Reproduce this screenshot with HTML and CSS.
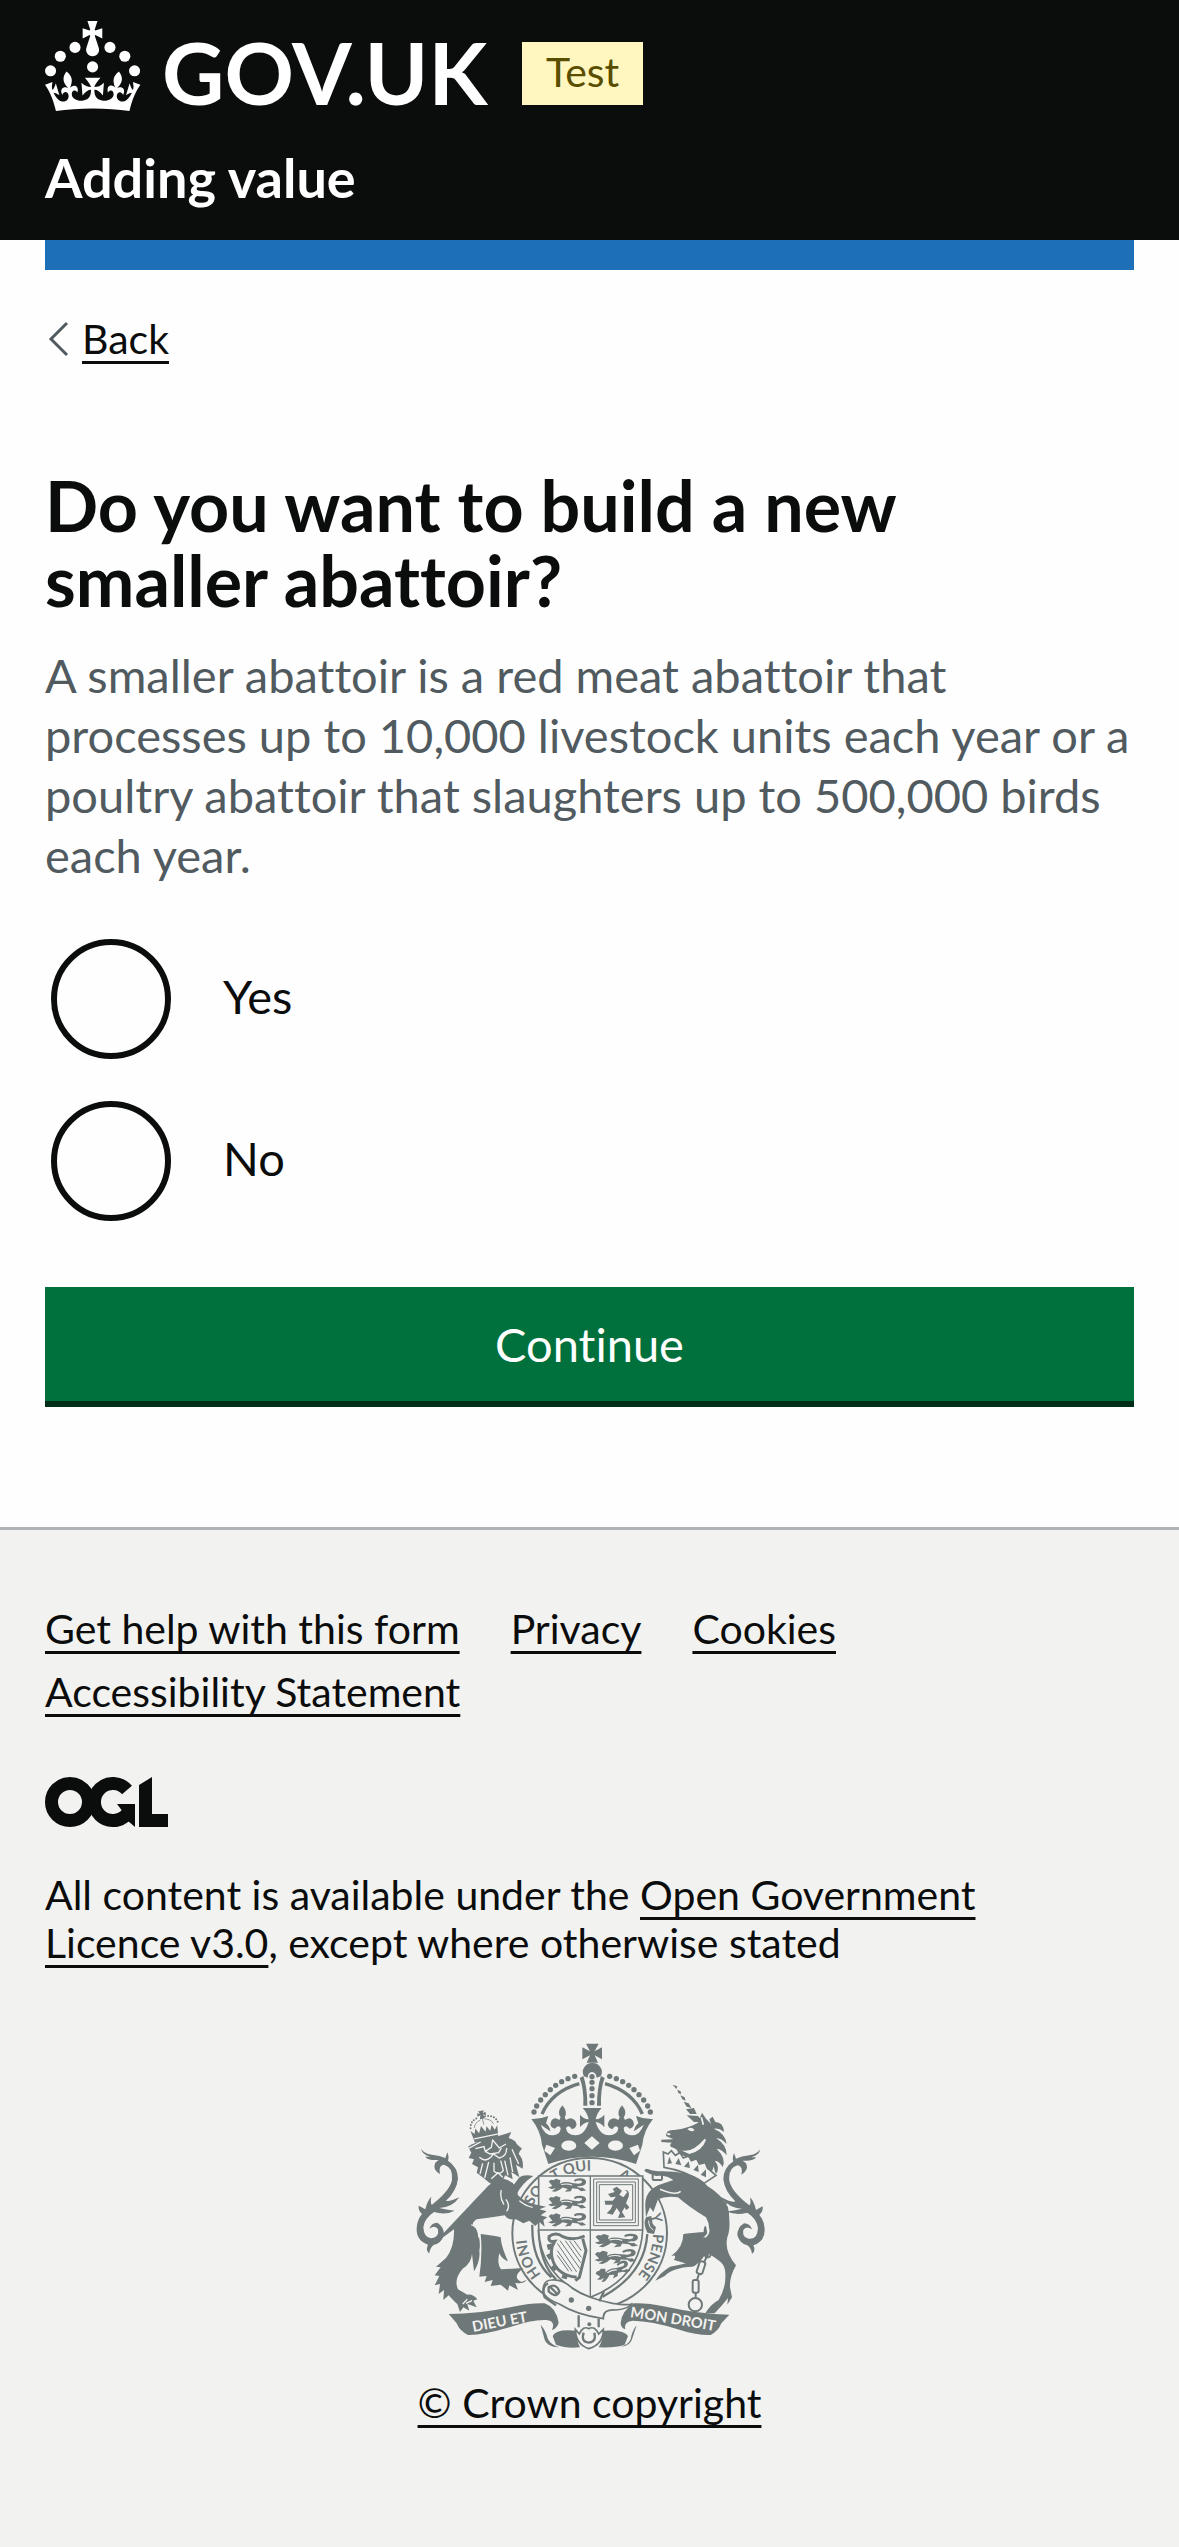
FILE: index.html
```html
<!DOCTYPE html>
<html lang="en">
<head>
<meta charset="utf-8">
<meta name="viewport" content="width=device-width, initial-scale=1">
<title>Do you want to build a new smaller abattoir? - Adding value - GOV.UK</title>
<link rel="stylesheet" href="styles.css">
</head>
<body>
<header class="header">
  <div class="header-inner">
    <div class="header-logo">
      <a class="logo-link" href="#" aria-label="GOV.UK">
        <svg class="logo" viewBox="0 0 450 90" fill="currentColor" aria-hidden="true">
          <g transform="scale(1.5)">
            <circle cx="20" cy="17.6" r="3.7"/><circle cx="10.2" cy="23.5" r="3.7"/><circle cx="3.7" cy="33.2" r="3.7"/><circle cx="31.7" cy="30.6" r="3.7"/><circle cx="43.3" cy="17.6" r="3.7"/><circle cx="53.2" cy="23.5" r="3.7"/><circle cx="59.7" cy="33.2" r="3.7"/>
            <path d="M33.1,9.8c.2-.1.3-.3.5-.5l4.6,2.4v-6.8l-4.6,1.5c-.1-.2-.3-.3-.5-.5l1.9-5.9h-6.7l1.9,5.9c-.2.1-.3.3-.5.5l-4.6-1.5v6.8l4.6-2.4c.1.2.3.3.5.5l-2.6,8c-.9,2.8,1.2,5.7,4.1,5.7h0c3,0,5.1-2.9,4.1-5.7l-2.6-8ZM37,37.9s-3.4,3.8-4.1,6.1c2.2,0,4.2-.5,6.4-2.8l-.7,8.5c-2-2.8-4.4-4.1-5.7-3.8.1,3.1.5,6.7,5.8,7.2,3.7.3,6.7-1.5,7-3.8.4-2.6-2-4.3-3.7-1.6-1.4-4.5,2.4-6.1,4.9-3.2-1.9-4.5-1.8-7.7,2.4-10.9,3,4,2.6,7.3-1.2,11.1,2.4-1.3,6.2,0,4,4.6-1.2-2.8-3.7-2.2-4.2.2-.3,1.7.7,3.7,3,4.2,1.9.3,4.7-.9,7-5.9-1.3,0-2.4.7-3.9,1.7l2.4-8c.6,2.3,1.4,3.7,2.2,4.5.6-1.6.5-2.8,0-5.3l5,1.8c-2.6,3.6-5.2,8.7-7.3,17.5-7.4-1.1-15.7-1.7-24.5-1.7h0c-8.8,0-17.1.6-24.5,1.7-2.1-8.9-4.7-13.9-7.3-17.5l5-1.8c-.5,2.5-.6,3.7,0,5.3.8-.8,1.6-2.3,2.2-4.5l2.4,8c-1.5-1-2.6-1.7-3.9-1.7,2.3,5,5.2,6.2,7,5.9,2.3-.4,3.3-2.4,3-4.2-.5-2.4-3-3.1-4.2-.2-2.2-4.6,1.6-6,4-4.6-3.7-3.7-4.2-7.1-1.2-11.1,4.2,3.2,4.3,6.4,2.4,10.9,2.5-2.8,6.3-1.3,4.9,3.2-1.8-2.7-4.1-1-3.7,1.6.3,2.3,3.3,4.1,7,3.8,5.4-.5,5.7-4.2,5.8-7.2-1.3-.2-3.7,1-5.7,3.8l-.7-8.5c2.2,2.3,4.2,2.7,6.4,2.8-.7-2.3-4.1-6.1-4.1-6.1h10.6,0Z"/>
          </g>
          <text class="wordmark" x="117" y="84">GOV.UK</text>
        </svg>
      </a>
      <strong class="tag">Test</strong>
    </div>
    <a class="service-name" href="#">Adding value</a>
  </div>
</header>

<div class="container">
  <div class="blue-bar"></div>
  <a class="back-link" href="#">
    <svg class="back-icon" viewBox="0 0 37 36" aria-hidden="true"><path d="M22 2 6 18l16 16"/></svg>
    <span class="back-text">Back</span>
  </a>
  <main class="main">
    <form class="form">
      <fieldset class="fieldset" aria-describedby="hint">
        <legend class="legend"><h1 class="heading">Do you want to build a new smaller abattoir?</h1></legend>
        <p class="hint" id="hint">A smaller abattoir is a red meat abattoir that processes up to 10,000 livestock units each year or a poultry abattoir that slaughters up to 500,000 birds each year.</p>
        <div class="radios">
          <div class="radio">
            <input class="radio-input" type="radio" name="build" id="build-yes" value="yes">
            <label class="radio-label" for="build-yes">Yes</label>
          </div>
          <div class="radio">
            <input class="radio-input" type="radio" name="build" id="build-no" value="no">
            <label class="radio-label" for="build-no">No</label>
          </div>
        </div>
      </fieldset>
      <button class="button" type="submit">Continue</button>
    </form>
  </main>
</div>

<footer class="footer">
  <nav class="footer-links" aria-label="Support links">
    <a class="link" href="#">Get help with this form</a>
    <a class="link" href="#">Privacy</a>
    <a class="link" href="#">Cookies</a>
    <a class="link" href="#">Accessibility Statement</a>
  </nav>
  <svg class="ogl" viewBox="0 0 123 50" role="img" aria-label="Open Government Licence">
    <circle cx="25" cy="25" r="18.500" class="ogl-line"/>
    <path class="ogl-line" d="M82 13A18.500 18.500 0 1 0 82 37"/>
    <path d="M72 27H90V50L83 44Q76 50 68 50L70 38 78 35Z"/>
    <path d="M94 8 107 0V37H123V50H94Z"/>
  </svg>
  <p class="licence">All content is available under the <a class="link" href="#">Open Government Licence v3.0</a>, except where otherwise stated</p>
  <a class="copyright" href="#">
    <svg class="crest" viewBox="44 67 1053 921" aria-hidden="true">
      <defs>
        <path id="ring" d="M571 830A190 190 0 0 1 571 450A190 190 0 0 1 571 830"/>
        <path id="ribbon-left" d="M222 934Q330 912 450 892"/>
        <path id="ribbon-right" d="M692 889Q820 908 980 938"/>
        <g id="passant">
          <path d="M2 8Q8 0 14 4L22 0 34 4 32 14 40 10Q54 8 66 12L84 14Q96 12 92 6 80 4 74 8 66 4 78 0 100-4 104 8 104 20 88 20L78 22Q86 26 94 24L104 32 90 34 82 28 66 26 62 34 46 36 54 28 40 24 32 30 20 36 10 34 22 26 10 28 0 24 12 20Z"/>
          <path class="cut" d="M36 16Q54 12 66 18" stroke-width="3"/>
        </g>
        <g id="crown-half">
          <path d="M396 295Q422 296 447 286L440 308Q452 318 453 332 436 320 424 312 436 346 462 344 484 342 484 322 478 310 466 324 448 318 456 300 464 286 480 298L484 290Q472 274 489 254 506 274 496 290L500 298Q516 286 528 300 538 318 518 326 508 310 500 322 502 344 528 344 556 344 568 304 552 306 542 320V282Q552 294 568 296 564 276 550 262H579V408Q510 408 447 430L428 372Q424 330 396 295Z"/>
          <path class="light" d="m579 347 23 20-23 20-23-20zM486 375a22 15 0 1 1 45 0 22 15 0 1 1-45 0zM441 372l26 10-14 22-18-14z"/>
          <g><circle cx="404" cy="274" r="8"/><circle cx="412" cy="256" r="8"/><circle cx="424" cy="238" r="8"/><circle cx="438" cy="222" r="8"/><circle cx="453" cy="207" r="8"/><circle cx="469" cy="194" r="8"/><circle cx="487" cy="183" r="8"/><circle cx="506" cy="174" r="8"/><circle cx="526" cy="167" r="8"/></g>
          <path class="line" d="M428 280Q458 212 540 189" stroke-width="10"/>
          <path d="M541 172 552 166Q564 200 564 255H552Q554 205 541 172Z"/>
        </g>
        <path id="tail" d="M66 384Q72 398 98 402 122 404 138 412L144 395Q150 410 146 420 176 440 176 474 172 510 140 540 150 544 180 530 160 560 120 562 148 568 166 570 140 584 104 574 76 592 72 620 74 656 100 652 120 648 116 626 108 612 90 624 96 606 114 606 134 618 134 642 126 668 104 672 92 680 90 698 78 690 86 672 50 660 52 622 54 596 68 580 56 570 58 555L78 566Q84 540 96 528 92 550 98 552 152 510 158 478 162 440 134 432 116 434 122 460 98 446 108 426L118 418Q84 420 78 408L92 408Q66 400 66 384Z"/>
      </defs>

      <!-- supporters' tails -->
      <use href="#tail"/>
      <use href="#tail" transform="matrix(-1 0 0 1 1148 2)"/>

      <!-- garter and shield -->
      <ellipse class="line" cx="571" cy="638" rx="232" ry="226" stroke-width="6"/>
      <path class="line" d="M399 612Q396 716 456 770M744 640Q736 760 610 828M418 628Q422 730 470 776" stroke-width="7"/>
      <g class="garter-text">
        <text><textPath href="#ring" startOffset="166">HONI</textPath></text>
        <text><textPath href="#ring" startOffset="384">SO</textPath></text>
        <text><textPath href="#ring" startOffset="484">T QUI</textPath></text>
        <text><textPath href="#ring" startOffset="684">A</textPath></text>
        <text><textPath href="#ring" startOffset="836">Y</textPath></text>
        <text><textPath href="#ring" startOffset="894">PENSE</textPath></text>
      </g>
      <path d="M360 470Q375 460 402 466 370 486 352 520L338 500Z"/>
      <path class="shield" d="M418 466H730V628Q724 770 573 830 424 770 418 628Z"/>
      <path class="line" d="M573 466V828M418 628H730" stroke-width="4"/>
      <use href="#passant" transform="translate(446 474) scale(1.1)"/>
      <use href="#passant" transform="translate(446 526) scale(1.1)"/>
      <use href="#passant" transform="translate(446 578) scale(1.1)"/>
      <use href="#passant" transform="translate(586 640) scale(1.250 1.100)"/>
      <use href="#passant" transform="translate(584 692) rotate(-3) scale(1.200 1.100)"/>
      <use href="#passant" transform="translate(584 752) rotate(-20) scale(1 1.100)"/>
      <path class="line" d="M583 475H717V615H583ZM592 484H708V606H592ZM600 492H700V598H600Z" stroke-width="3"/>
      <path d="M640 505 652 498 668 510 660 522 672 530 684 514 676 508Q692 506 688 528L680 548 690 560Q680 574 676 560L668 574 678 590 656 592 662 576 652 562 640 582 622 578 634 566 640 552 618 552 616 540 640 540 650 528 634 530 626 520 646 514Z"/>
      <!-- harp -->
      <path class="line" d="M448 648Q470 632 490 648 520 662 556 646M550 654 560 690 540 770 528 780" stroke-width="9"/>
      <path class="line" d="M450 645Q444 665 466 662 448 690 462 724 478 764 532 770" stroke-width="9"/>
      <path d="M458 668l-16 4 4 16 14-4zM454 696l-14 8 10 14 10-8zM466 730l-14 12 14 10 10-12zM492 756l-6 16 16 4 4-14z"/>
      <path class="line" d="m482 660 60 84m-68-76 58 86m-58-64 44 62m-20-92 46 66m-34-66 36 50m-22-50 22 30m-72 14 34 48" stroke-width="3"/>

      <!-- royal crown -->
      <use href="#crown-half"/>
      <use href="#crown-half" transform="matrix(-1 0 0 1 1157 0)"/>
      <path d="M560 69H598L586 92 608 80V116L586 104 596 126H562L572 104 549 116V80L572 92ZM579 127a27 27 0 0 1 25 40L592 171Q590 155 578 154 566 155 565 171L554 167A27 27 0 0 1 579 127Z"/>
      <circle cx="578" cy="168" r="8"/><circle cx="578" cy="185" r="8"/><circle cx="578" cy="204" r="8"/><circle cx="578" cy="225" r="8"/><circle cx="578" cy="246" r="8"/>

      <!-- lion -->
      <path d="M266 496 128 642 112 664 164 626Q166 680 140 712L110 738 124 740 106 764 120 766 106 794 122 790 118 820 134 808 132 838 148 824Q164 842 174 850L182 874 192 860 210 870 204 850 232 860 222 840 234 836Q222 820 204 822L176 806Q162 776 190 744 216 728 218 700L224 752Q244 720 240 690 246 660 230 622 210 610 232 596 280 590 316 584 326 600 350 596L372 608 390 600 408 616 420 604 436 618 432 598 444 590 424 584 442 572 420 566 440 558 412 552Q380 548 356 524 352 488 324 478L300 470Z"/>
      <path d="M244 640Q280 644 304 650 306 680 326 722 308 716 300 698 292 730 306 746L372 742Q336 770 366 784L382 778Q370 792 348 786L356 808 330 794 326 810 304 792 274 796 280 778 256 784 262 766 240 768Q250 700 244 640Z"/>
      <path class="cut" d="M306 508Q300 530 314 552M320 536Q334 556 322 572M216 612Q240 620 238 650M360 540Q380 556 400 560M204 836l-14 14M218 840l-18 8" stroke-width="4"/>
      <path d="M206 378Q216 370 226 368L336 334 328 352Q350 360 352 370L368 384Q360 390 358 400 374 416 370 444L350 432 360 470 336 454 340 476 318 464 296 502 270 486 250 470 232 456 236 440 218 430 224 416 208 412 216 396Z"/>
      <path class="cut" d="M206 384 244 364M228 384l26-6 4 14 18-12 4-22 20 24 20-12M258 392l14 8 26-4 8-14M240 410q18 16 34 0l8-10 18 12q22-4 22-30M250 428l-8 32M268 424l-12 48M276 474l20-18 14 14M338 386l20 44M332 410l8 44M316 420l10 44M284 426v26q16 14 28-2l-8-30" stroke-width="4"/>
      <g transform="rotate(-12 254 320)">
        <path d="M212 322 222 334 228 318 236 334 246 314 256 334 262 318 270 334 278 318 284 334 294 322 290 360H218ZM246 270h18l-5 8 9-3v10l-9-3 4 12h-16l4-12-9 3v-10l9 3z"/>
        <path class="dots" d="M214 314Q218 290 246 288M264 288Q294 290 298 314"/>
        <path class="line" d="M225 316Q230 300 248 296M262 296Q280 300 284 316M255 292v20" stroke-width="2"/>
        <path class="cut" d="M218 348h74" stroke-width="4"/>
      </g>

      <!-- unicorn -->
      <path d="M820 192 834 197 831 205ZM834 207 844 212 845 221 837 217ZM843 224 856 230 859 240 849 236ZM853 243 868 248 876 262 862 258ZM860 266 884 262 892 280 872 280ZM862 284 896 286 912 304 884 304Z"/>
      <path d="M786 357 822 356 800 346Q800 326 824 328 870 322 896 306L908 276 920 294Q952 320 954 370 952 420 938 452L836 396Q836 384 814 378 810 370 818 366L786 364Z"/>
      <path d="M930 296 940 288 948 304Q972 304 974 334 960 322 944 324 980 340 982 370 966 352 950 352 984 374 982 404 966 384 952 384 982 414 970 440 960 420 946 420 964 440 950 460 940 440 942 400 950 340 930 296Z"/>
      <path class="light" d="M864 326q10-10 22 2-8 8-22-2zM834 384q38 22 82-30l4 4q-12 34-50 42zM802 340q6-6 12 0-4 8-12 0z"/>
      <path class="cut" d="M906 290 912 312" stroke-width="5"/>
      <path class="collar" d="M792 394 806 400 816 390 828 404 842 396 852 412 868 406 876 420 892 414 900 430 918 426 924 442 950 464 914 488Q860 450 794 440Z"/>
      <path d="M810 408l8 20-14 2zM838 412l8 22-18-4zM868 422l4 20-18-4zM896 432l2 22-16-6zM920 446l0 24-16-8z"/>
      <path d="M738 560Q734 514 776 494L822 478Q800 462 770 466 720 450 742 444 760 450 776 452 810 450 860 458 906 472 924 496 966 520 986 560 996 620 984 650 974 690 1010 734 990 770 992 800L998 830 984 852 986 832 968 854 946 878H918Q934 850 958 838 980 800 978 764 980 740 964 724 946 710 930 700 916 730 916 704 900 730 880 738 820 740 796 766L768 780Q780 758 812 738 860 730 884 718 910 680 914 640 910 620 920 612L924 640Q936 620 920 590 870 560 836 530 800 524 776 536L762 574 752 560 740 590Z"/>
      <path d="M852 640Q890 636 916 634 906 700 886 736L824 718Q834 700 816 706 852 680 852 640Z"/>
      <path class="cut" d="M782 506Q830 526 844 512M916 610Q940 630 916 650" stroke-width="5"/>
      <path d="M740 590 756 586 760 610 770 620 764 640 744 636Q730 610 740 590Z"/>
      <path class="cut" d="M748 600q0 20 14 28" stroke-width="3"/>
      <g class="chain">
        <rect x="760" y="458" width="28" height="20" rx="4"/>
        <rect x="944" y="532" width="36" height="20" rx="6" transform="rotate(28 962 542)"/>
        <rect x="968" y="572" width="18" height="38" rx="6"/>
        <rect x="950" y="624" width="18" height="38" rx="6" transform="rotate(28 959 643)"/>
        <rect x="922" y="672" width="18" height="38" rx="6" transform="rotate(32 931 691)"/>
        <rect x="896" y="722" width="18" height="38" rx="6" transform="rotate(18 905 741)"/>
        <rect x="880" y="778" width="18" height="38" rx="6"/>
        <path d="M974 556v16M970 608l-6 14M949 662l-8 12M922 710l-8 14M899 760l-6 18M889 816v14"/>
        <circle cx="888" cy="852" r="20"/>
      </g>

      <!-- belt -->
      <path class="band" d="M434 820Q426 780 456 778 490 774 520 804 560 832 640 848 690 856 700 848 690 864 650 868 610 864 612 894 530 882 480 850 450 840 434 820Z"/>
      <path class="line" d="M446 788Q424 800 436 830L470 854M448 800Q470 786 480 812 472 834 448 812ZM454 800l20 20M600 842l14-30M538 884V920M598 894V920" stroke-width="7"/>
      <circle cx="516" cy="838" r="8"/><circle cx="568" cy="863" r="8"/><circle cx="570" cy="911" r="6"/>

      <!-- motto ribbon -->
      <path d="M148 880Q240 880 340 858 400 846 436 848 470 860 478 906 474 922 458 928 470 900 440 898 400 896 330 920 250 944 206 943 180 930 172 908ZM990 882Q900 880 800 858 740 846 704 848 668 870 664 906 664 922 678 926 672 904 700 900 760 902 830 924 890 944 934 943 958 930 966 908Z"/>
      <path d="M460 946Q470 924 530 930 532 960 542 980 500 984 470 972ZM686 946Q676 926 612 930 610 960 598 980 650 982 676 972ZM424 912Q440 930 446 956 456 974 480 980 440 980 434 950ZM712 914Q698 930 694 956 686 974 664 978 694 978 700 950Z"/>
      <path class="band" d="M528 926 540 940Q552 914 568 924 586 914 598 940L612 926Q612 972 568 984 530 972 528 926Z"/>
      <path class="line" d="M553 936Q544 964 568 966 592 964 585 936" stroke-width="7"/>
      <text class="motto"><textPath href="#ribbon-left">DIEU ET</textPath></text>
      <text class="motto"><textPath href="#ribbon-right">MON DROIT</textPath></text>
    </svg>
    <span class="copyright-text">© Crown copyright</span>
  </a>
</footer>
</body>
</html>
```
FILE: styles.css
```css
*,
*::before,
*::after {
  box-sizing: border-box;
}

body {
  margin: 0;
  font-family: Lato, "Liberation Sans", sans-serif;
  font-size: 41px;
  font-variant-ligatures: none;
  line-height: 48px;
  color: #0b0c0c;
  background: #fefefe;
}

.header {
  padding: 21px 45px 32px;
  color: #fff;
  background: #0b0c0c;
}

.header-inner {
  display: flex;
  flex-direction: column;
  align-items: flex-start;
  gap: 37px;
}

.header-logo {
  display: flex;
  align-items: flex-start;
  gap: 27px;
}

.logo-link {
  color: inherit;
}

.logo {
  display: block;
  width: 450px;
  height: 90px;
  overflow: visible;
}

.wordmark {
  font-size: 86px;
  font-weight: 700;
}

.tag {
  margin-top: 21px;
  padding: 6px 24px 9px;
  font-weight: 400;
  color: #594d00;
  background: #fff7bf;
}

.service-name {
  font-size: 54px;
  font-weight: 700;
  line-height: 60px;
  color: inherit;
  text-decoration: none;
}

.container {
  padding: 0 45px;
}

.blue-bar {
  height: 30px;
  background: #1d70b8;
}

.back-link {
  display: flex;
  align-items: center;
  width: max-content;
  margin-top: 45px;
  color: inherit;
  text-decoration: none;
}

.back-icon {
  width: 37px;
  height: 36px;
  fill: none;
  stroke: #505a5f;
  stroke-width: 3;
}

.back-text,
.link,
.copyright-text {
  color: inherit;
  text-decoration: underline;
  text-decoration-thickness: 3px;
  text-underline-offset: 7px;
}

.main {
  padding: 105px 0 126px;
}

.fieldset {
  min-width: 0;
  margin: 0;
  padding: 0;
  border: 0;
}

.legend {
  padding: 0;
}

.heading {
  margin: 0;
  font-size: 70px;
  font-weight: 700;
  line-height: 75px;
}

.hint {
  margin: 27px 0 54px;
  font-size: 47px;
  line-height: 60px;
  color: #505a5f;
}

.radios {
  display: flex;
  flex-direction: column;
  gap: 42px;
}

.radio {
  display: flex;
  padding-left: 6px;
}

.radio-input {
  appearance: none;
  flex: none;
  width: 120px;
  height: 120px;
  margin: 0;
  border: 6px solid #0b0c0c;
  border-radius: 50%;
}

.radio-input:checked {
  background: radial-gradient(circle, #0b0c0c 30px, transparent 31px);
}

.radio-label {
  padding: 27px 52px 33px;
  font-size: 47px;
  line-height: 60px;
}

.button {
  display: block;
  width: 100%;
  margin: 66px 0 0;
  padding: 27px 30px;
  border: 0;
  font: inherit;
  font-size: 47px;
  font-variant-ligatures: none;
  line-height: 60px;
  color: #fff;
  background: #00703c;
  box-shadow: 0 6px 0 #002d18;
}

.footer {
  display: flex;
  flex-direction: column;
  align-items: flex-start;
  padding: 75px 45px 120px;
  border-top: 3px solid #b1b4b6;
  background: #f2f2f0;
}

.footer-links {
  display: flex;
  flex-wrap: wrap;
  gap: 15px 51px;
}

.ogl {
  width: 123px;
  height: 50px;
  margin: 61px 0 44px;
  fill: #0b0c0c;
}

.ogl-line {
  fill: none;
  stroke: #0b0c0c;
  stroke-width: 13;
}

.licence {
  max-width: 1000px;
  margin: 0 0 76px;
}

.copyright {
  display: flex;
  flex-direction: column;
  align-items: center;
  align-self: center;
  gap: 29px;
  color: inherit;
  text-decoration: none;
}

.crest {
  width: 351px;
  height: 307px;
  fill: #6f7878;
}

.crest .light {
  fill: #f2f2f0;
}

.crest .line,
.crest .chain,
.crest .dots {
  fill: none;
  stroke: #6f7878;
}

.crest .chain {
  stroke-width: 6;
}

.crest .dots {
  stroke-width: 6;
  stroke-linecap: round;
  stroke-dasharray: 0 9;
}

.crest .cut {
  fill: none;
  stroke: #f2f2f0;
}

.crest .shield,
.crest .band,
.crest .collar {
  fill: #f2f2f0;
  stroke: #6f7878;
  stroke-width: 5;
}

.garter-text {
  font-size: 44px;
  font-weight: 700;
}

.motto {
  font-size: 44px;
  font-weight: 700;
  fill: #f2f2f0;
}
```
